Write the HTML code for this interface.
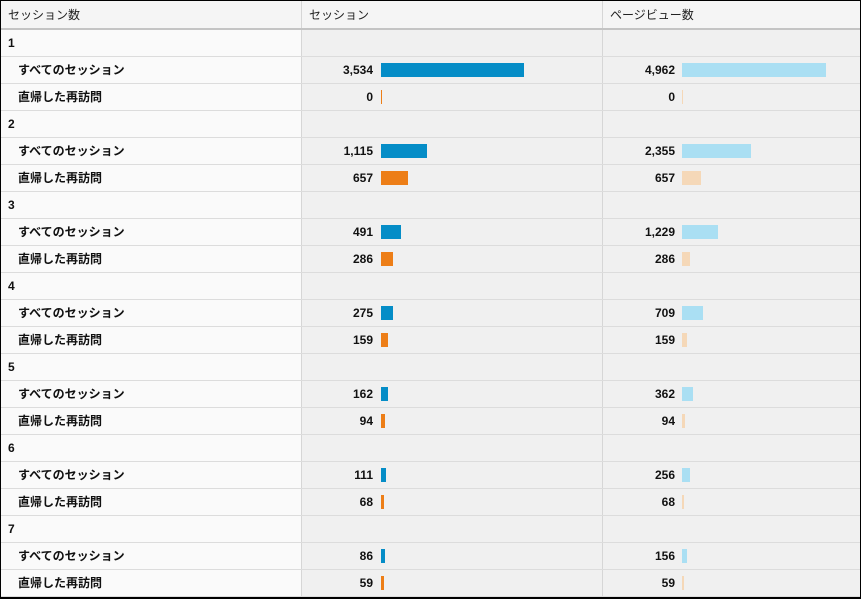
<!DOCTYPE html>
<html><head><meta charset="utf-8"><style>
*{margin:0;padding:0;box-sizing:border-box}
body{width:861px;height:599px;background:#fff;font-family:"Liberation Sans","Noto Sans CJK JP",sans-serif;font-size:12px;color:#222;position:relative;overflow:hidden}
.wrap{position:absolute;left:0;top:0;width:861px;height:599px;border:1px solid #000;border-bottom:2px solid #000;background:#f0f0f0}
.hdr{height:29px;border-bottom:2px solid #c4c4c4;display:flex;background:#f5f5f5}
.hdr div{line-height:28px;padding-left:7px;color:#222}
.c1{width:301px;border-right:1px solid #d6d6d6}
.c2{width:301px;border-right:1px solid #d6d6d6;position:relative}
.c3{width:256px;position:relative}
.row{height:27px;border-bottom:1px solid #dcdcdc;display:flex}
.row>div{height:26px}
.row .c1{background:#fafafa;font-weight:bold;line-height:26px;padding-left:17px;color:#111}
.row.g .c1{padding-left:7px}
.n{position:absolute;right:229px;top:0;line-height:26px;font-weight:bold;color:#111}
.c3 .n{right:184px}
.b{position:absolute;left:79px;top:6px;height:14px}
.c3 .b{left:79px}
.s{background:#058dc7}.o{background:#ed7e17}.p{background:#aadff3}.q{background:#f5d8b8}
</style></head><body><div class="wrap">
<div class="hdr"><div class="c1">セッション数</div><div class="c2">セッション</div><div class="c3">ページビュー数</div></div>

<div class="row g"><div class="c1">1</div><div class="c2"></div><div class="c3"></div></div>
<div class="row"><div class="c1">すべてのセッション</div><div class="c2"><span class="n">3,534</span><span class="b s" style="width:143px"></span></div><div class="c3"><span class="n">4,962</span><span class="b p" style="width:144px"></span></div></div>
<div class="row"><div class="c1">直帰した再訪問</div><div class="c2"><span class="n">0</span><span class="b o" style="width:1px"></span></div><div class="c3"><span class="n">0</span><span class="b q" style="width:1px"></span></div></div>

<div class="row g"><div class="c1">2</div><div class="c2"></div><div class="c3"></div></div>
<div class="row"><div class="c1">すべてのセッション</div><div class="c2"><span class="n">1,115</span><span class="b s" style="width:46px"></span></div><div class="c3"><span class="n">2,355</span><span class="b p" style="width:69px"></span></div></div>
<div class="row"><div class="c1">直帰した再訪問</div><div class="c2"><span class="n">657</span><span class="b o" style="width:27px"></span></div><div class="c3"><span class="n">657</span><span class="b q" style="width:19px"></span></div></div>

<div class="row g"><div class="c1">3</div><div class="c2"></div><div class="c3"></div></div>
<div class="row"><div class="c1">すべてのセッション</div><div class="c2"><span class="n">491</span><span class="b s" style="width:20px"></span></div><div class="c3"><span class="n">1,229</span><span class="b p" style="width:36px"></span></div></div>
<div class="row"><div class="c1">直帰した再訪問</div><div class="c2"><span class="n">286</span><span class="b o" style="width:12px"></span></div><div class="c3"><span class="n">286</span><span class="b q" style="width:8px"></span></div></div>

<div class="row g"><div class="c1">4</div><div class="c2"></div><div class="c3"></div></div>
<div class="row"><div class="c1">すべてのセッション</div><div class="c2"><span class="n">275</span><span class="b s" style="width:12px"></span></div><div class="c3"><span class="n">709</span><span class="b p" style="width:21px"></span></div></div>
<div class="row"><div class="c1">直帰した再訪問</div><div class="c2"><span class="n">159</span><span class="b o" style="width:7px"></span></div><div class="c3"><span class="n">159</span><span class="b q" style="width:5px"></span></div></div>

<div class="row g"><div class="c1">5</div><div class="c2"></div><div class="c3"></div></div>
<div class="row"><div class="c1">すべてのセッション</div><div class="c2"><span class="n">162</span><span class="b s" style="width:7px"></span></div><div class="c3"><span class="n">362</span><span class="b p" style="width:11px"></span></div></div>
<div class="row"><div class="c1">直帰した再訪問</div><div class="c2"><span class="n">94</span><span class="b o" style="width:4px"></span></div><div class="c3"><span class="n">94</span><span class="b q" style="width:3px"></span></div></div>

<div class="row g"><div class="c1">6</div><div class="c2"></div><div class="c3"></div></div>
<div class="row"><div class="c1">すべてのセッション</div><div class="c2"><span class="n">111</span><span class="b s" style="width:5px"></span></div><div class="c3"><span class="n">256</span><span class="b p" style="width:8px"></span></div></div>
<div class="row"><div class="c1">直帰した再訪問</div><div class="c2"><span class="n">68</span><span class="b o" style="width:3px"></span></div><div class="c3"><span class="n">68</span><span class="b q" style="width:2px"></span></div></div>

<div class="row g"><div class="c1">7</div><div class="c2"></div><div class="c3"></div></div>
<div class="row"><div class="c1">すべてのセッション</div><div class="c2"><span class="n">86</span><span class="b s" style="width:4px"></span></div><div class="c3"><span class="n">156</span><span class="b p" style="width:5px"></span></div></div>
<div class="row"><div class="c1">直帰した再訪問</div><div class="c2"><span class="n">59</span><span class="b o" style="width:3px"></span></div><div class="c3"><span class="n">59</span><span class="b q" style="width:2px"></span></div></div>
</div></body></html>
